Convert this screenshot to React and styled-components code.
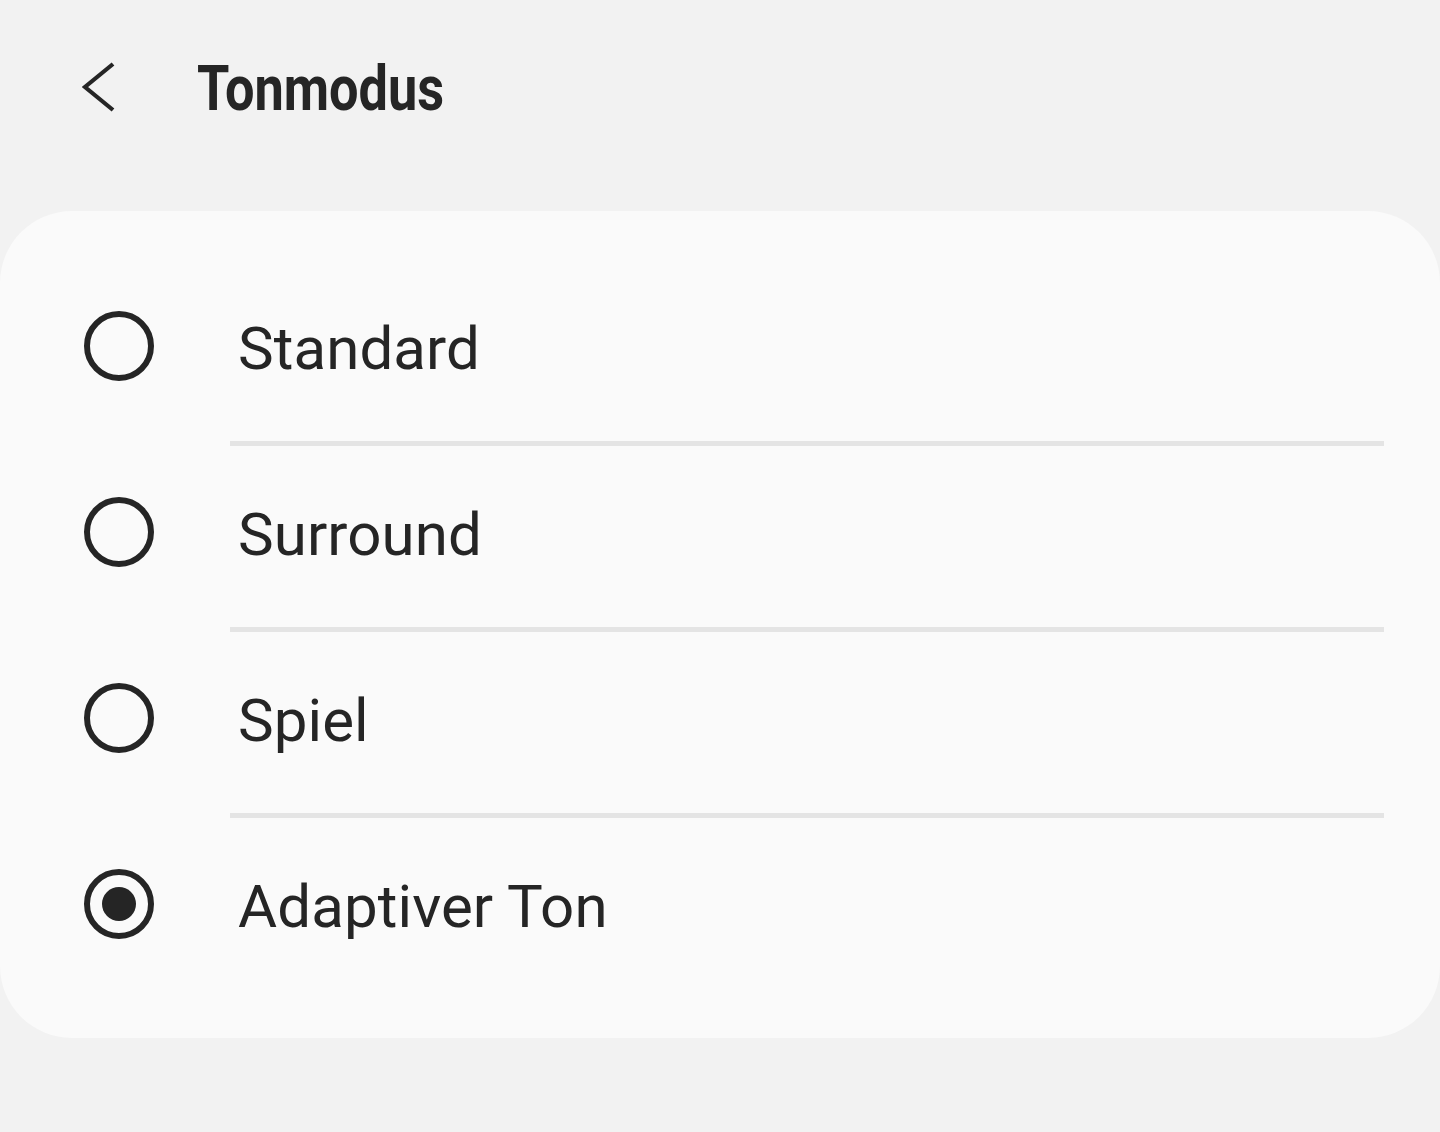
import React from "react";
import styled, { createGlobalStyle } from "styled-components";

const Global = createGlobalStyle`
  html, body { margin: 0; padding: 0; background: #f2f2f2; }
  body { font-family: Roboto, "Noto Sans", sans-serif; color: #252525; }
`;

const Page = styled.div`
  width: 1440px;
  height: 1132px;
  background: #f2f2f2;
  display: flex;
  flex-direction: column;
`;

const Header = styled.header`
  height: 211px;
  box-sizing: border-box;
  padding: 0 0 38px 82px;
  display: flex;
  align-items: center;
`;

const BackButton = styled.button`
  border: 0;
  background: none;
  padding: 0;
  width: 34px;
  height: 50px;
  display: flex;
  align-items: center;
  justify-content: center;
  cursor: pointer;
  color: #252525;
`;

const Title = styled.h1`
  margin: 4px 0 0 81px;
  font-family: Roboto, sans-serif;
  font-weight: 700;
  font-size: 63px;
  line-height: 1;
  color: #252525;
  transform: scaleX(0.83);
  transform-origin: left center;
`;

const Card = styled.section`
  background: #fafafa;
  border-radius: 72px;
  padding: 49px 0 48px;
`;

const Row = styled.label`
  height: 172px;
  display: flex;
  align-items: center;
  padding-left: 84px;
  cursor: pointer;
`;

const Radio = styled.span`
  width: 70px;
  height: 70px;
  box-sizing: border-box;
  border: 6px solid #252525;
  border-radius: 50%;
  display: flex;
  align-items: center;
  justify-content: center;
  flex-shrink: 0;
  &::after {
    content: "";
    width: 34px;
    height: 34px;
    border-radius: 50%;
    background: #252525;
    display: ${(p) => (p.$checked ? "block" : "none")};
  }
`;

const Label = styled.span`
  margin: 4px 0 0 84px;
  font-size: 60px;
  font-weight: 400;
  color: #252525;
  letter-spacing: 0.1px;
`;

const Divider = styled.div`
  height: 5px;
  margin: 9px 56px 0 230px;
  background: #e4e4e4;
`;

const options = ["Standard", "Surround", "Spiel", "Adaptiver Ton"];

export default function App() {
  const selected = "Adaptiver Ton";
  return (
    <Page>
      <Global />
      <Header>
        <BackButton aria-label="Zurück">
          <svg width="34" height="52" viewBox="0 0 34 52">
            <polyline
              points="31,3 3,26 31,49"
              fill="none"
              stroke="#252525"
              strokeWidth="4.2"
              strokeLinecap="butt"
              strokeLinejoin="miter"
            />
          </svg>
        </BackButton>
        <Title>Tonmodus</Title>
      </Header>
      <Card>
        {options.map((o, i) => (
          <React.Fragment key={o}>
            <Row>
              <Radio $checked={o === selected} />
              <Label>{o}</Label>
            </Row>
            {i < options.length - 1 && <Divider />}
          </React.Fragment>
        ))}
      </Card>
    </Page>
  );
}
